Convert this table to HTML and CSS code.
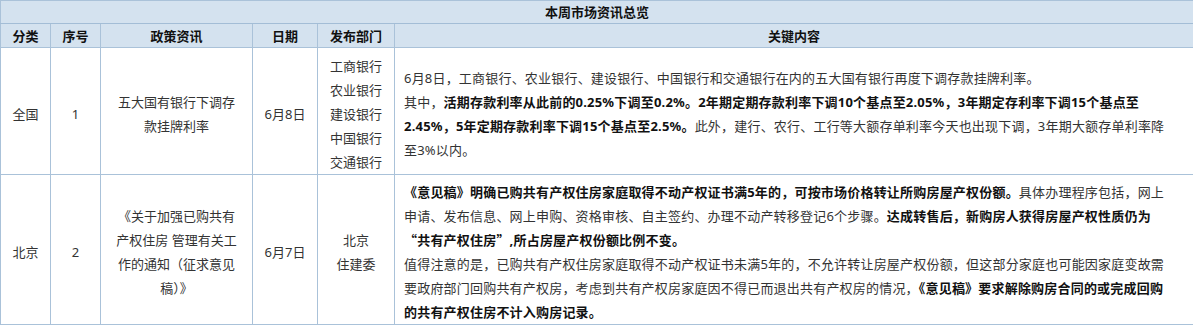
FILE: index.html
```html
<!DOCTYPE html>
<html lang="zh">
<head>
<meta charset="utf-8">
<title>本周市场资讯总览</title>
<link rel="stylesheet" href="styles.css">
</head>
<body>
<table class="news">
  <colgroup>
    <col class="c-cat"><col class="c-no"><col class="c-title"><col class="c-date"><col class="c-dept"><col class="c-key">
  </colgroup>
  <thead>
    <tr class="caption-row"><th colspan="6">本周市场资讯总览</th></tr>
    <tr class="head-row">
      <th>分类</th><th>序号</th><th>政策资讯</th><th>日期</th><th>发布部门</th><th>关键内容</th>
    </tr>
  </thead>
  <tbody>
    <tr class="row-1">
      <td class="center">全国</td>
      <td class="center">1</td>
      <td class="center title">五大国有银行下调存款挂牌利率</td>
      <td class="center">6月8日</td>
      <td class="center">工商银行<br>农业银行<br>建设银行<br>中国银行<br>交通银行</td>
      <td class="key">
        <p>6月8日，工商银行、农业银行、建设银行、中国银行和交通银行在内的五大国有银行再度下调存款挂牌利率。</p>
        <p>其中，<b>活期存款利率从此前的0.25%下调至0.2%。2年期定期存款利率下调10个基点至2.05%，3年期定存利率下调15个基点至2.45%，5年定期存款利率下调15个基点至2.5%。</b>此外，建行、农行、工行等大额存单利率今天也出现下调，3年期大额存单利率降至3%以内。</p>
      </td>
    </tr>
    <tr class="row-2">
      <td class="center">北京</td>
      <td class="center">2</td>
      <td class="center title">《关于加强已购共有产权住房 管理有关工作的通知（征求意见稿）》</td>
      <td class="center">6月7日</td>
      <td class="center">北京<br>住建委</td>
      <td class="key">
        <p><b>《意见稿》明确已购共有产权住房家庭取得不动产权证书满5年的，可按市场价格转让所购房屋产权份额。</b>具体办理程序包括，网上申请、发布信息、网上申购、资格审核、自主签约、办理不动产转移登记6个步骤。<b>达成转售后，新购房人获得房屋产权性质仍为<span class="cjk">“</span>共有产权住房<span class="cjk">”</span>,所占房屋产权份额比例不变。</b></p>
        <p>值得注意的是，已购共有产权住房家庭取得不动产权证书未满5年的，不允许转让房屋产权份额，但这部分家庭也可能因家庭变故需要政府部门回购共有产权房，考虑到共有产权房家庭因不得已而退出共有产权房的情况，<b>《意见稿》要求解除购房合同的或完成回购的共有产权住房不计入购房记录。</b></p>
      </td>
    </tr>
  </tbody>
</table>
</body>
</html>
```

FILE: styles.css
```css
html, body {
  margin: 0;
  padding: 0;
  background: #ffffff;
}

body {
  font-family: "Noto Sans", "Noto Sans CJK SC", sans-serif;
  font-size: 13px;
  color: #333333;
}

.news {
  width: 1193px;
  border-collapse: collapse;
  table-layout: fixed;
}

.c-cat { width: 50px; }
.c-no { width: 50px; }
.c-title { width: 152px; }
.c-date { width: 65px; }
.c-dept { width: 77px; }
.c-key { width: 799px; }

.news th,
.news td {
  border: 1px solid #aac2d9;
  padding: 0;
}

.news th {
  background: #d4e2ef;
  color: #111111;
  font-weight: bold;
  font-size: 13px;
  line-height: 22px;
  height: 22px;
  text-align: center;
}

.news .head-row th {
  padding-top: 1px;
  height: 21px;
}

.caption-row th {
  border-bottom-color: #a3bdd6;
}

.news td {
  line-height: 24px;
  vertical-align: middle;
}

.center {
  text-align: center;
}

.news td.title {
  padding-left: 13px;
  padding-right: 13px;
}

.news td.key {
  padding-left: 9px;
  padding-right: 24px;
  text-align: left;
  letter-spacing: 0.2px;
}

.news tr.row-1 td {
  height: 120px;
  padding-top: 6px;
}

.news tr.row-2 td {
  height: 144px;
  padding-top: 5px;
}

.key p {
  margin: 0;
}

.key b {
  color: #111111;
}

.cjk {
  font-family: "Noto Sans CJK SC", sans-serif;
}
```
